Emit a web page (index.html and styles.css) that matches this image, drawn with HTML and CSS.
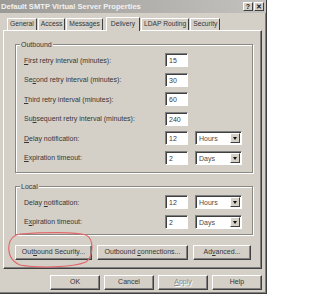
FILE: index.html
```html
<!DOCTYPE html>
<html lang="en">
<head>
    <meta charset="UTF-8">
    <title>Default SMTP Virtual Server Properties</title>
    <link rel="stylesheet" href="styles.css">
</head>
<body>
    <div class="dialog">
        <div class="titlebar">
            <span class="title">Default SMTP Virtual Server Properties</span>
            <div class="title-buttons">
                <span class="tbtn">?</span>
                <span class="tbtn">&#x2715;</span>
            </div>
        </div>

        <!-- Tabs -->
        <div class="tabs">
            <span class="tab">General</span>
            <span class="tab">Access</span>
            <span class="tab">Messages</span>
            <span class="tab active">Delivery</span>
            <span class="tab">LDAP Routing</span>
            <span class="tab">Security</span>
        </div>

        <div class="panel">
            <div class="group outbound">
                <span class="group-label">Outbound</span>
                <div class="row">
                    <span class="label"><u>F</u>irst retry interval (minutes):</span>
                    <span class="input">15</span>
                </div>
                <div class="row">
                    <span class="label">Se<u>c</u>ond retry interval (minutes):</span>
                    <span class="input">30</span>
                </div>
                <div class="row">
                    <span class="label"><u>T</u>hird retry interval (minutes):</span>
                    <span class="input">60</span>
                </div>
                <div class="row">
                    <span class="label">Su<u>b</u>sequent retry interval (minutes):</span>
                    <span class="input">240</span>
                </div>
                <div class="row">
                    <span class="label"><u>D</u>elay notification:</span>
                    <span class="input">12</span>
                    <span class="select">Hours<span class="arrow"></span></span>
                </div>
                <div class="row">
                    <span class="label"><u>E</u>xpiration timeout:</span>
                    <span class="input">2</span>
                    <span class="select">Days<span class="arrow"></span></span>
                </div>
            </div>

            <div class="group local">
                <span class="group-label">Local</span>
                <div class="row">
                    <span class="label">Delay <u>n</u>otification:</span>
                    <span class="input">12</span>
                    <span class="select">Hours<span class="arrow"></span></span>
                </div>
                <div class="row">
                    <span class="label">E<u>x</u>piration timeout:</span>
                    <span class="input">2</span>
                    <span class="select">Days<span class="arrow"></span></span>
                </div>
            </div>

            <div class="panel-buttons">
                <span class="btn sec">Out<u>b</u>ound Security...</span>
                <span class="btn conn">Outbound <u>c</u>onnections...</span>
                <span class="btn adv">Ad<u>v</u>anced...</span>
            </div>
        </div>

        <div class="dialog-buttons">
            <span class="btn">OK</span>
            <span class="btn">Cancel</span>
            <span class="btn disabled"><u>A</u>pply</span>
            <span class="btn">Help</span>
        </div>
    </div>

    <!-- hand drawn mark round the button -->
    <svg class="mark" width="90" height="40" viewBox="0 0 90 40">
        <path d="M14 3 C40 1 70 1 80 4 C88 8 88 24 80 31 C66 37 30 37 14 34 C5 30 2 22 3 14 C4 8 8 4 14 3" fill="none" stroke="#e2676a" stroke-width="1.1"/>
    </svg>
</body>
</html>
```

FILE: styles.css
```css
body {
    margin: 0;
    background-color: #ffffff;
    font-family: "Liberation Sans", Arial, sans-serif;
    font-size: 7px;
    color: #363636;
    position: relative;
    width: 320px;
    height: 298px;
    overflow: hidden;
}

u {
    text-decoration-thickness: 1px;
    text-underline-offset: 1px;
}

.dialog {
    width: 267px;
    height: 294px;
    box-sizing: border-box;
    background-color: #d4d0c8;
    border-right: 1px solid #404040;
    border-bottom: 1px solid #404040;
    box-shadow: inset -1px -1px 0 #808080;
    display: flex;
    flex-direction: column;
}

.titlebar {
    height: 13px;
    display: flex;
    align-items: center;
    justify-content: space-between;
    background: linear-gradient(to right, #9c9a96, #c4c2be);
}

.title {
    font-weight: bold;
    font-size: 7.6px;
    color: #f2f2f2;
    padding-left: 1px;
    white-space: nowrap;
}

.title-buttons {
    display: flex;
    margin-right: 2px;
}

.tbtn {
    width: 10px;
    height: 9px;
    box-sizing: border-box;
    background-color: #d4d0c8;
    border: 1px solid;
    border-color: #ffffff #404040 #404040 #ffffff;
    font-size: 7px;
    font-weight: bold;
    line-height: 7px;
    text-align: center;
    color: #202020;
}

.tbtn + .tbtn {
    margin-left: 1px;
}

.tabs {
    display: flex;
    align-items: flex-end;
    height: 17px;
    padding-left: 7px;
    position: relative;
    z-index: 1;
}

.tab {
    height: 11px;
    line-height: 10px;
    font-size: 6.7px;
    padding: 0 2px;
    margin-right: 1px;
    border: 1px solid;
    border-bottom: none;
    border-color: #ffffff #404040 #ffffff #ffffff;
    border-radius: 1px 1px 0 0;
    white-space: nowrap;
}

.tab.active {
    height: 13px;
    line-height: 11px;
    padding: 0 4px;
    margin: 0 1px 0 2px;
    background-color: #d4d0c8;
    margin-bottom: -1px;
}

.panel {
    margin-left: 3px;
    width: 259px;
    height: 239px;
    box-sizing: border-box;
    border: 1px solid;
    border-color: #ffffff #404040 #404040 #ffffff;
    box-shadow: inset -1px -1px 0 #808080;
    padding: 13px 0 0 11px;
}

.group {
    position: relative;
    width: 238px;
    box-sizing: border-box;
    border: 1px solid #8a8882;
    box-shadow: inset 1px 1px 0 #ffffff, 1px 1px 0 #ffffff;
    padding: 8px 0 0 8px;
}

.group.outbound {
    height: 129px;
}

.group.local {
    height: 49px;
    margin-top: 13px;
}

.group-label {
    position: absolute;
    top: -5px;
    left: 4px;
    padding: 0 1px;
    background-color: #d4d0c8;
    line-height: 9px;
}

.row {
    display: flex;
    align-items: center;
    height: 14px;
    margin-bottom: 5.5px;
}

.label {
    width: 141px;
    white-space: nowrap;
}

.input {
    width: 23px;
    height: 14px;
    box-sizing: border-box;
    background-color: #ffffff;
    border: 1px solid;
    border-color: #808080 #ffffff #ffffff #808080;
    box-shadow: inset 1px 1px 0 #404040;
    padding: 2px 0 0 3px;
    line-height: 9px;
    color: #3a3a3a;
}

.select {
    margin-left: 7px;
    width: 47px;
    height: 14px;
    box-sizing: border-box;
    background-color: #ffffff;
    border: 1px solid;
    border-color: #808080 #ffffff #ffffff #808080;
    box-shadow: inset 1px 1px 0 #404040;
    padding: 2px 0 0 3px;
    line-height: 9px;
    color: #4a4a4a;
    position: relative;
}

.arrow {
    position: absolute;
    right: 1px;
    top: 1px;
    width: 10px;
    height: 10px;
    box-sizing: border-box;
    background-color: #d4d0c8;
    border: 1px solid;
    border-color: #ffffff #404040 #404040 #ffffff;
}

.arrow::after {
    content: "";
    position: absolute;
    left: 2px;
    top: 3px;
    border-left: 2.5px solid transparent;
    border-right: 2.5px solid transparent;
    border-top: 3px solid #101010;
}

.panel-buttons {
    display: flex;
    gap: 5px;
    margin-top: 10px;
}

.btn {
    height: 15px;
    box-sizing: border-box;
    border: 1px solid;
    border-color: #ffffff #404040 #404040 #ffffff;
    box-shadow: inset -1px -1px 0 #808080;
    text-align: center;
    line-height: 12px;
    white-space: nowrap;
    color: #363636;
}

.btn.sec {
    width: 77px;
}

.btn.conn {
    width: 91px;
}

.btn.adv {
    width: 58px;
}

.dialog-buttons {
    display: flex;
    gap: 4px;
    margin: 6px 0 0 50px;
}

.dialog-buttons .btn {
    width: 50px;
}

.btn.disabled {
    color: #8a8884;
    text-shadow: 1px 1px 0 #ffffff;
}

.mark {
    position: absolute;
    left: 6px;
    top: 231px;
}
```
